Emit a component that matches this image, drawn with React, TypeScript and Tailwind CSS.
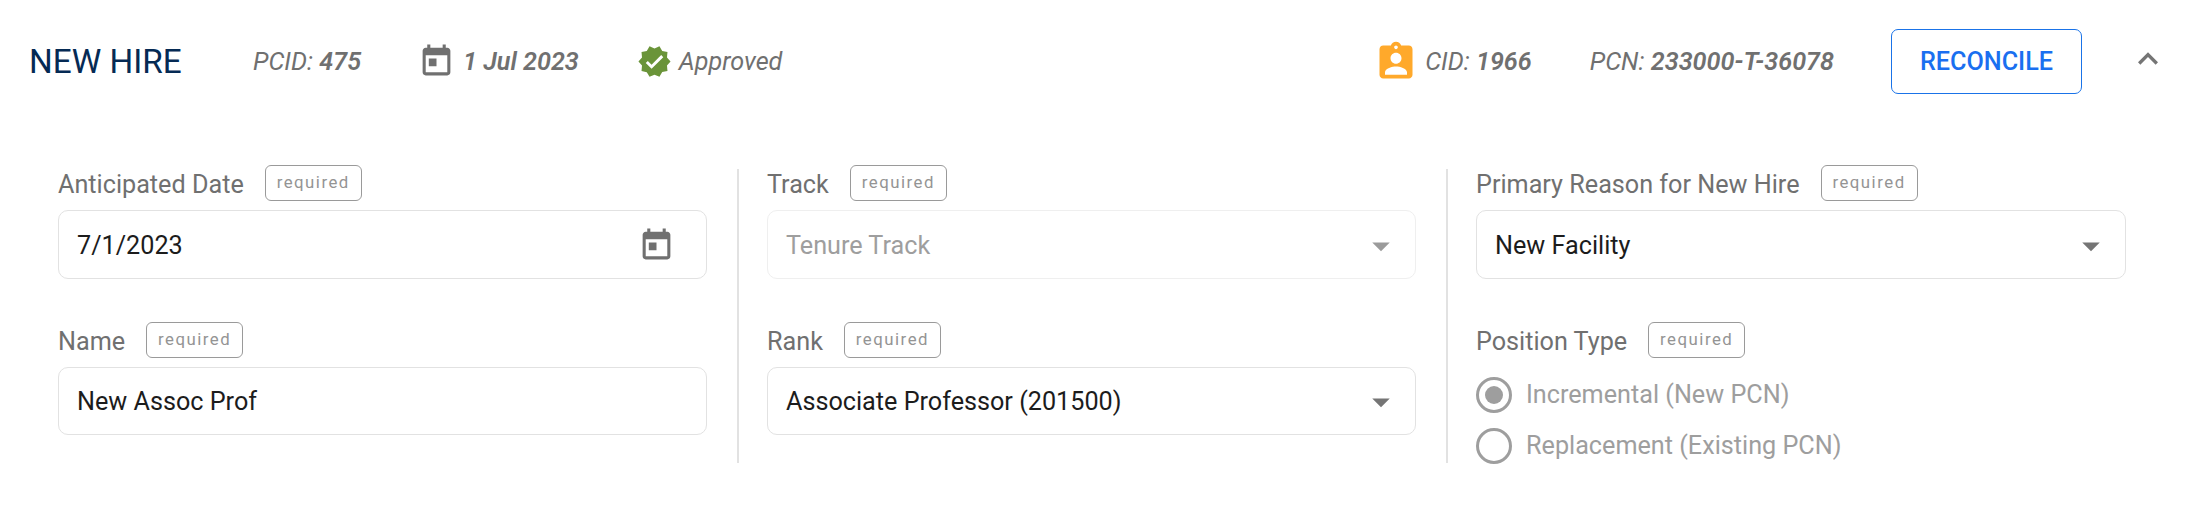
const FONT = "font-['Roboto',sans-serif]";

function TodayIcon({ className }: { className: string }) {
  return (
    <svg viewBox="0 0 24 24" className={className} fill="currentColor">
      <path d="M19 3h-1V1h-2v2H8V1H6v2H5c-1.11 0-1.99.9-1.99 2L3 19c0 1.1.89 2 2 2h14c1.1 0 2-.9 2-2V5c0-1.1-.9-2-2-2zm0 16H5V8h14v11zM7 10h5v5H7z" />
    </svg>
  );
}

function CaretDown({ disabled }: { disabled?: boolean }) {
  return (
    <svg viewBox="0 0 24 24" className={`size-[42px] ${disabled ? "text-[#9b9b9b]" : "text-[#757575]"}`} fill="currentColor">
      <path d="M7 10l5 5 5-5z" />
    </svg>
  );
}

function Label({ text }: { text: string }) {
  return (
    <div className="flex items-center h-9 gap-[21px]">
      <span className="text-[25.2px] leading-none text-[#707070] pt-[3px]">{text}</span>
      <span className="flex items-center justify-center h-9 w-[97px] border border-[#9a9a9a] rounded-[6px] text-[16.8px] tracking-[1.5px] text-[#949494] pb-[1px]">
        required
      </span>
    </div>
  );
}

function Box({ children, disabled, h }: { children: React.ReactNode; disabled?: boolean; h: string }) {
  return (
    <div
      className={`mt-[9px] flex items-center justify-between ${h} border rounded-[10px] pt-[2px] pl-[18px] pr-[13px] text-[25.2px] ${
        disabled ? "border-[#efefef] text-[#9e9e9e]" : "border-[#e2e2e2] text-[#1c1c1c]"
      }`}
    >
      {children}
    </div>
  );
}

function Radio({ checked, text }: { checked?: boolean; text: string }) {
  return (
    <div className="flex items-center gap-[15px] h-[35px] text-[25.2px] text-[#9e9e9e]">
      <span className="flex items-center justify-center size-[36px] -ml-[0.5px] -mr-[0.5px] rounded-full border-[3px] border-[#9e9e9e]">
        {checked && <span className="size-[18px] rounded-full bg-[#9e9e9e]" />}
      </span>
      {text}
    </div>
  );
}

function Meta({ label, value }: { label: string; value: string }) {
  return (
    <span className="italic text-[25.2px] text-[#707070]">
      {label}: <span className="font-semibold">{value}</span>
    </span>
  );
}

export default function App() {
  return (
    <div className={`${FONT} w-[2190px] h-[516px] bg-white`}>
      <div className="flex items-center pt-[29px] pl-[29px]">
        <h1 className="w-[224px] text-[33.3px] leading-none text-[#052a54]">NEW HIRE</h1>
        <Meta label="PCID" value="475" />
        <TodayIcon className="size-[37px] ml-[57px] text-[#707070]" />
        <span className="ml-[8px] italic font-semibold text-[25.2px] text-[#707070]">1 Jul 2023</span>
        <svg viewBox="0 0 24 24" className="size-[35px] ml-[58px] text-[#6a9439]" fill="currentColor">
          <path d="M23 12l-2.44-2.78.34-3.68-3.61-.82-1.89-3.18L12 3 8.6 1.54 6.71 4.72l-3.61.81.34 3.68L1 12l2.44 2.78-.34 3.69 3.61.82 1.89 3.18L12 21l3.4 1.46 1.89-3.18 3.61-.82-.34-3.68L23 12zm-13 5l-4-4 1.41-1.41L10 14.17l6.59-6.59L18 9l-8 8z" />
        </svg>
        <span className="ml-[7px] italic text-[25.2px] text-[#707070]">Approved</span>
        <div className="ml-auto flex items-center">
          <svg viewBox="0 0 24 24" className="size-[44px] text-[#ffa92b]" fill="currentColor">
            <path d="M19 3h-4.18C14.4 1.84 13.3 1 12 1c-1.3 0-2.4.84-2.82 2H5c-1.1 0-2 .9-2 2v14c0 1.1.9 2 2 2h14c1.1 0 2-.9 2-2V5c0-1.1-.9-2-2-2zm-7 0c.55 0 1 .45 1 1s-.45 1-1 1-1-.45-1-1 .45-1 1-1zm0 4c1.66 0 3 1.34 3 3s-1.34 3-3 3-3-1.34-3-3 1.34-3 3-3zm6 12H6v-1.4c0-2 4-3.1 6-3.1s6 1.1 6 3.1V19z" />
          </svg>
          <span className="ml-[7px]"><Meta label="CID" value="1966" /></span>
          <span className="ml-[58px]"><Meta label="PCN" value="233000-T-36078" /></span>
          <button className="ml-[57px] w-[191px] h-[65px] border border-[#1a73e8] rounded-[7px] text-[25.2px] font-medium text-[#1a6ff0]">
            RECONCILE
          </button>
          <svg viewBox="0 0 24 24" className="size-10 ml-[46px] mr-[22px] -mt-[5px] text-[#757575]" fill="currentColor">
            <path d="M12 8l-6 6 1.41 1.41L12 10.83l4.59 4.58L18 14z" />
          </svg>
        </div>
      </div>

      <div className="flex pl-[58px] mt-[71px]">
        <div className="w-[649px]">
          <Label text="Anticipated Date" />
          <Box h="h-[69px]">
            7/1/2023
            <TodayIcon className="size-[37px] text-[#707070] mr-[18px]" />
          </Box>
          <div className="mt-[43px]">
            <Label text="Name" />
            <Box h="h-[68px]">New Assoc Prof</Box>
          </div>
        </div>
        <div className="w-[2px] h-[294px] ml-[30px] mr-[28px] mt-[4px] bg-[#e2e2e2]" />
        <div className="w-[649px]">
          <Label text="Track" />
          <Box h="h-[69px]" disabled>
            Tenure Track
            <CaretDown disabled />
          </Box>
          <div className="mt-[43px]">
            <Label text="Rank" />
            <Box h="h-[68px]">
              Associate Professor (201500)
              <CaretDown />
            </Box>
          </div>
        </div>
        <div className="w-[2px] h-[294px] ml-[30px] mr-[28px] mt-[4px] bg-[#e2e2e2]" />
        <div className="w-[650px]">
          <Label text="Primary Reason for New Hire" />
          <Box h="h-[69px]">
            New Facility
            <CaretDown />
          </Box>
          <div className="mt-[43px]">
            <Label text="Position Type" />
            <div className="mt-[19px] flex flex-col gap-4">
              <Radio checked text="Incremental (New PCN)" />
              <Radio text="Replacement (Existing PCN)" />
            </div>
          </div>
        </div>
      </div>
    </div>
  );
}
